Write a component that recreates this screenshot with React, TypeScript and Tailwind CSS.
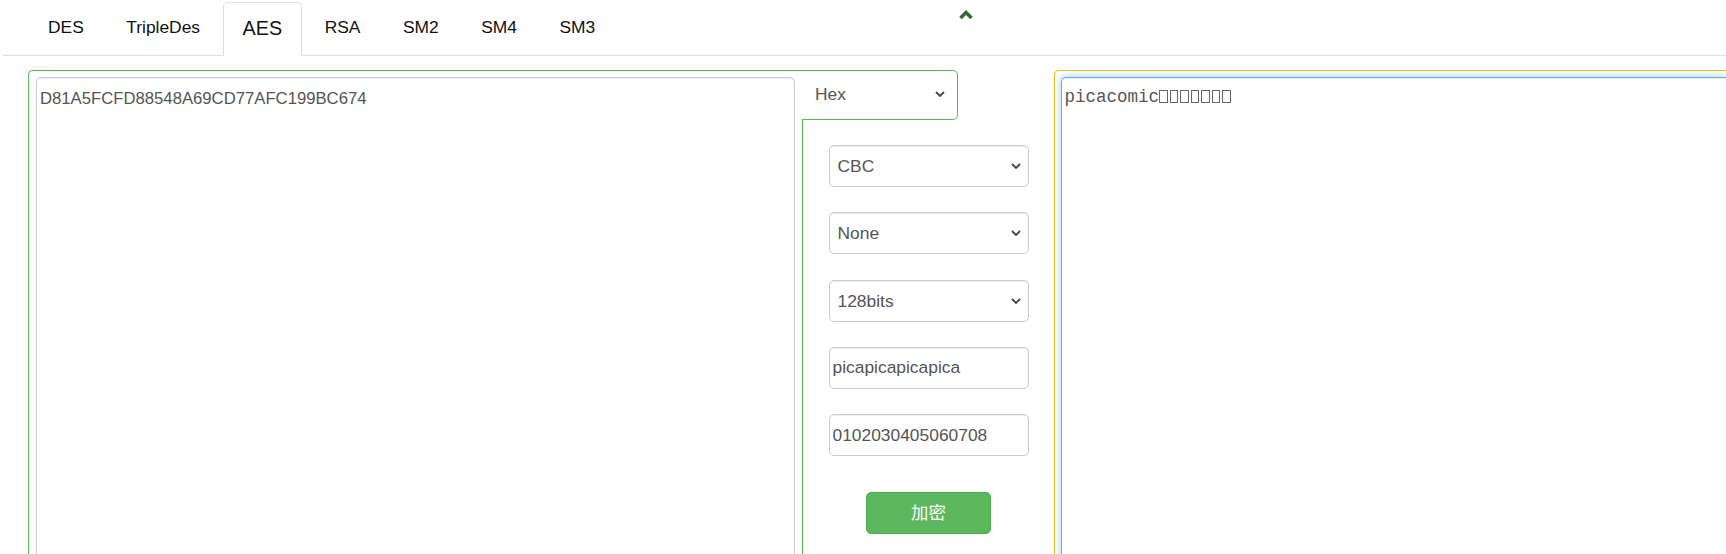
import { useState } from "react";

const tabs: string[] = ["DES", "TripleDes", "AES", "RSA", "SM2", "SM4", "SM3"];

const Chevron = () => (
  <svg width="10" height="6" viewBox="0 0 10 6" className="shrink-0">
    <path d="M1 1l4 4 4-4" fill="none" stroke="#444" strokeWidth="1.8" />
  </svg>
);

const FakeSelect = ({ value }: { value: string }) => (
  <div className="w-[200px] h-[42px] border border-[#ccc] rounded-[5px] bg-white flex items-center justify-between pl-[8px] pr-[7px] text-[17.4px] text-[#555] shadow-[inset_0_1px_1px_rgba(0,0,0,0.075)]">
    <span>{value}</span>
    <Chevron />
  </div>
);

const FakeInput = ({ value }: { value: string }) => (
  <input
    readOnly
    value={value}
    className="w-[200px] h-[42px] border border-[#ccc] rounded-[5px] bg-white px-[3px] text-[17.4px] text-[#555] outline-none shadow-[inset_0_1px_1px_rgba(0,0,0,0.075)]"
  />
);

export default function App() {
  const [active, setActive] = useState("AES");

  return (
    <div
      className="w-[1726px] h-[554px] overflow-hidden bg-white"
      style={{ fontFamily: '"Liberation Sans", "Noto Sans CJK SC", Arial, sans-serif' }}
    >
      {/* tabs */}
      <div className="relative ml-[3px] h-[56px] border-b border-[#ddd] flex items-end pl-[25px]">
        {tabs.map((t) => {
          const on = t === active;
          return (
            <div
              key={t}
              onClick={() => setActive(t)}
              className={
                on
                  ? "h-[54px] -mb-px mr-[2.5px] px-[19px] flex items-center bg-white border border-[#ddd] border-b-white rounded-t-[5px] text-[19.8px] text-[#111] cursor-pointer"
                  : "h-[54px] -mb-px mr-[2.5px] px-[19px] pb-[4px] flex items-center border border-transparent text-[17.4px] text-[#111] cursor-pointer"
              }
            >
              {t}
            </div>
          );
        })}

        {/* collapse arrow */}
        <svg
          width="16"
          height="12"
          viewBox="0 0 16 12"
          className="absolute left-[955px] top-[8px]"
        >
          <path d="M2.5 10L8 4.5l5.5 5.5" fill="none" stroke="#2f6b31" strokeWidth="3.5" />
        </svg>
      </div>

      {/* panels */}
      <div className="flex mt-[14px] pl-[28px] h-[600px]">
        {/* input text */}
        <div className="w-[774px] border-l border-t border-[#5cb85c] rounded-tl-[5px] pl-[7px] pr-[7.5px] pt-[6px]">
          <textarea
            readOnly
            value="D81A5FCFD88548A69CD77AFC199BC674"
            className="w-full h-[600px] resize-none border border-[#ccc] rounded-t-[5px] px-[3px] pt-[8px] text-[16.7px] text-[#555] outline-none shadow-[inset_0_1px_1px_rgba(0,0,0,0.075)]"
          />
        </div>

        {/* options */}
        <div className="w-[252px] flex flex-col">
          <div className="w-[156px] h-[50px] border-t border-r border-b border-[#5cb85c] rounded-r-[5px] flex items-center justify-between pl-[13px] pr-[12px] pb-[2px] text-[17.4px] text-[#555]">
            <span>Hex</span>
            <Chevron />
          </div>
          <div className="flex-1 border-l border-[#5cb85c] flex flex-col items-center pt-[25px] gap-[25.3px]">
            <FakeSelect value="CBC" />
            <FakeSelect value="None" />
            <FakeSelect value="128bits" />
            <FakeInput value="picapicapicapica" />
            <FakeInput value="0102030405060708" />
            <button className="mt-[11px] w-[125px] h-[42px] rounded-[5px] bg-[#5cb85c] border border-[#4cae4c] text-white text-[17.4px]">
              加密
            </button>
          </div>
        </div>

        {/* output text */}
        <div className="flex-1 border-l border-t border-[#e8c10c] rounded-tl-[5px] pl-[5.5px] pt-[6px]">
          <div
            className="h-[600px] border border-r-0 border-[#66afe9] rounded-tl-[5px] pl-[3px] pt-[9px] text-[17.5px] text-[#555] leading-[20px] shadow-[inset_0_1px_1px_rgba(0,0,0,0.075),0_0_8px_rgba(102,175,233,0.6)]"
            style={{ fontFamily: '"Liberation Mono", "Courier New", monospace' }}
          >
            picacomic
            {[0, 1, 2, 3, 4, 5, 6].map((i) => (
              <span
                key={i}
                className="inline-block align-[-1px] w-[8.5px] h-[13px] border border-[#666] mr-[2px]"
              />
            ))}
          </div>
        </div>
      </div>
    </div>
  );
}
